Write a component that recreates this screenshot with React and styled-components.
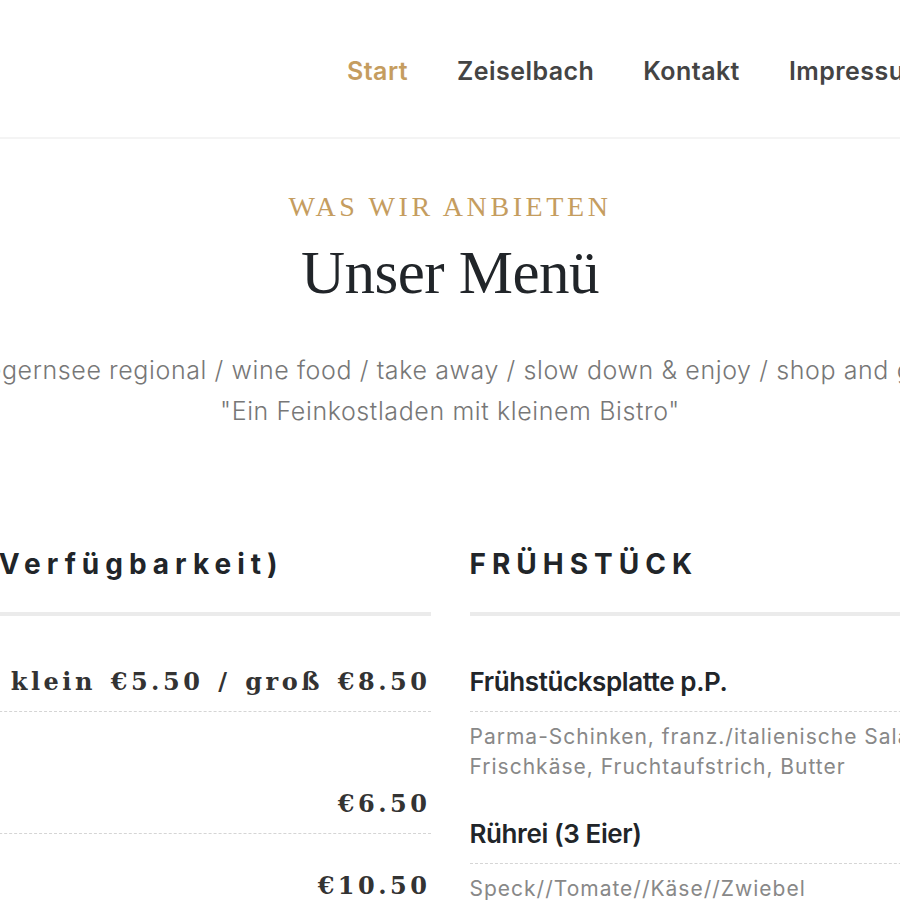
import React from 'react';
import styled, { createGlobalStyle } from 'styled-components';

const GlobalStyle = createGlobalStyle`
  html, body {
    margin: 0;
    padding: 0;
    background: #fff;
    overflow: hidden;
  }
  body {
    font-family: "Inter", "Open Sans", sans-serif;
    color: #212529;
  }
`;

const gold = '#c59d5f';

const menu = {
  left: {
    title: 'Kuchen (je nach Verfügbarkeit)',
    items: [
      { name: 'Kaffeespezialitäten', price: 'klein €5.50 / groß €8.50', desc: ['Espresso'] },
      { name: 'Hausgemachter Kuchen', price: '€6.50' },
      { name: 'Kuchen & Kaffee', price: '€10.50' },
    ],
  },
  right: {
    title: 'FRÜHSTÜCK',
    items: [
      {
        name: 'Frühstücksplatte p.P.',
        desc: [
          'Parma-Schinken, franz./italienische Salami, Käse,',
          'Frischkäse, Fruchtaufstrich, Butter',
        ],
      },
      { name: 'Rührei (3 Eier)', desc: ['Speck//Tomate//Käse//Zwiebel'] },
    ],
  },
};

export default function App() {
  return (
    <>
      <GlobalStyle />
      <Header>
        <Nav>
          <NavLink $active>Start</NavLink>
          <NavLink>Zeiselbach</NavLink>
          <NavLink>Kontakt</NavLink>
          <NavLink>Impressum</NavLink>
        </Nav>
      </Header>

      <Section>
        <Intro>
          <Kicker>WAS WIR ANBIETEN</Kicker>
          <Title>Unser Menü</Title>
          <Lead>
            Tegernsee regional / wine food / take away / slow down &amp; enjoy / shop and go
          </Lead>
          <Lead>"Ein Feinkostladen mit kleinem Bistro"</Lead>
        </Intro>

        <Columns>
          {[menu.left, menu.right].map((col) => (
            <Column key={col.title}>
              <ColumnTitle>{col.title}</ColumnTitle>
              <Bar />
              {col.items.map((item) => (
                <Item key={item.name}>
                  <ItemHead>
                    <ItemName>{item.name}</ItemName>
                    {item.price && <Price>{item.price}</Price>}
                  </ItemHead>
                  {item.desc && (
                    <Desc>
                      {item.desc.map((line, i) => (
                        <React.Fragment key={i}>
                          {i > 0 && <br />}
                          {line}
                        </React.Fragment>
                      ))}
                    </Desc>
                  )}
                </Item>
              ))}
            </Column>
          ))}
        </Columns>
      </Section>
    </>
  );
}

const Header = styled.header`
  height: 137px;
  display: flex;
  border-bottom: 2px solid #f4f4f4;
  overflow: hidden;
`;

const Nav = styled.nav`
  display: flex;
  align-items: center;
  gap: 49px;
  padding: 4px 0 0 347px;
  white-space: nowrap;
`;

const NavLink = styled.a`
  font-family: "Inter", sans-serif;
  font-size: 25px;
  font-weight: 600;
  letter-spacing: 0.45px;
  color: ${(p) => (p.$active ? gold : '#444')};
  cursor: pointer;
`;

const Section = styled.main`
  display: flex;
  flex-direction: column;
  align-items: center;
  overflow: hidden;
  padding-top: 50px;
`;

const Intro = styled.div`
  display: flex;
  flex-direction: column;
  align-items: center;
  white-space: nowrap;
`;

const Kicker = styled.div`
  font-family: "Liberation Serif", serif;
  font-size: 28px;
  letter-spacing: 3.6px;
  color: ${gold};
  line-height: 36px;
`;

const Title = styled.h1`
  margin: 16px 0 45px;
  font-family: "Liberation Serif", serif;
  font-weight: 400;
  font-size: 61px;
  line-height: 64px;
  color: #212529;
  letter-spacing: -0.5px;
`;

const Lead = styled.p`
  margin: 0;
  font-family: "Inter", sans-serif;
  font-size: 25px;
  font-weight: 300;
  letter-spacing: 0.6px;
  line-height: 41px;
  color: #777;
`;

const Columns = styled.div`
  display: flex;
  gap: 39px;
  justify-content: center;
  margin-top: 112px;
`;

const Column = styled.div`
  width: 731px;
  flex-shrink: 0;
`;

const ColumnTitle = styled.h3`
  margin: 0;
  font-family: "Inter", sans-serif;
  font-weight: 700;
  font-size: 28px;
  letter-spacing: 6px;
  word-spacing: -8px;
  line-height: 40px;
  white-space: nowrap;
  color: #212529;
`;

const Bar = styled.div`
  height: 4px;
  background: #ebebeb;
  margin: 28px 0 48px;
`;

const Item = styled.div`
  margin-bottom: 34px;
`;

const ItemHead = styled.div`
  display: flex;
  justify-content: space-between;
  align-items: center;
  padding-bottom: 11px;
  border-bottom: 1px dashed #d5d5d5;
  line-height: 36px;
`;

const ItemName = styled.h4`
  margin: 0;
  font-family: "Inter", sans-serif;
  font-weight: 600;
  font-size: 26px;
  letter-spacing: -0.4px;
  color: #212529;
`;

const Price = styled.span`
  font-family: "DejaVu Serif", serif;
  font-weight: 700;
  font-size: 24px;
  letter-spacing: 3.5px;
  word-spacing: 3px;
  color: #333;
  white-space: nowrap;
`;

const Desc = styled.p`
  margin: 10px 0 0;
  font-family: "Inter", sans-serif;
  font-size: 21px;
  letter-spacing: 1px;
  line-height: 30px;
  color: #888;
`;
